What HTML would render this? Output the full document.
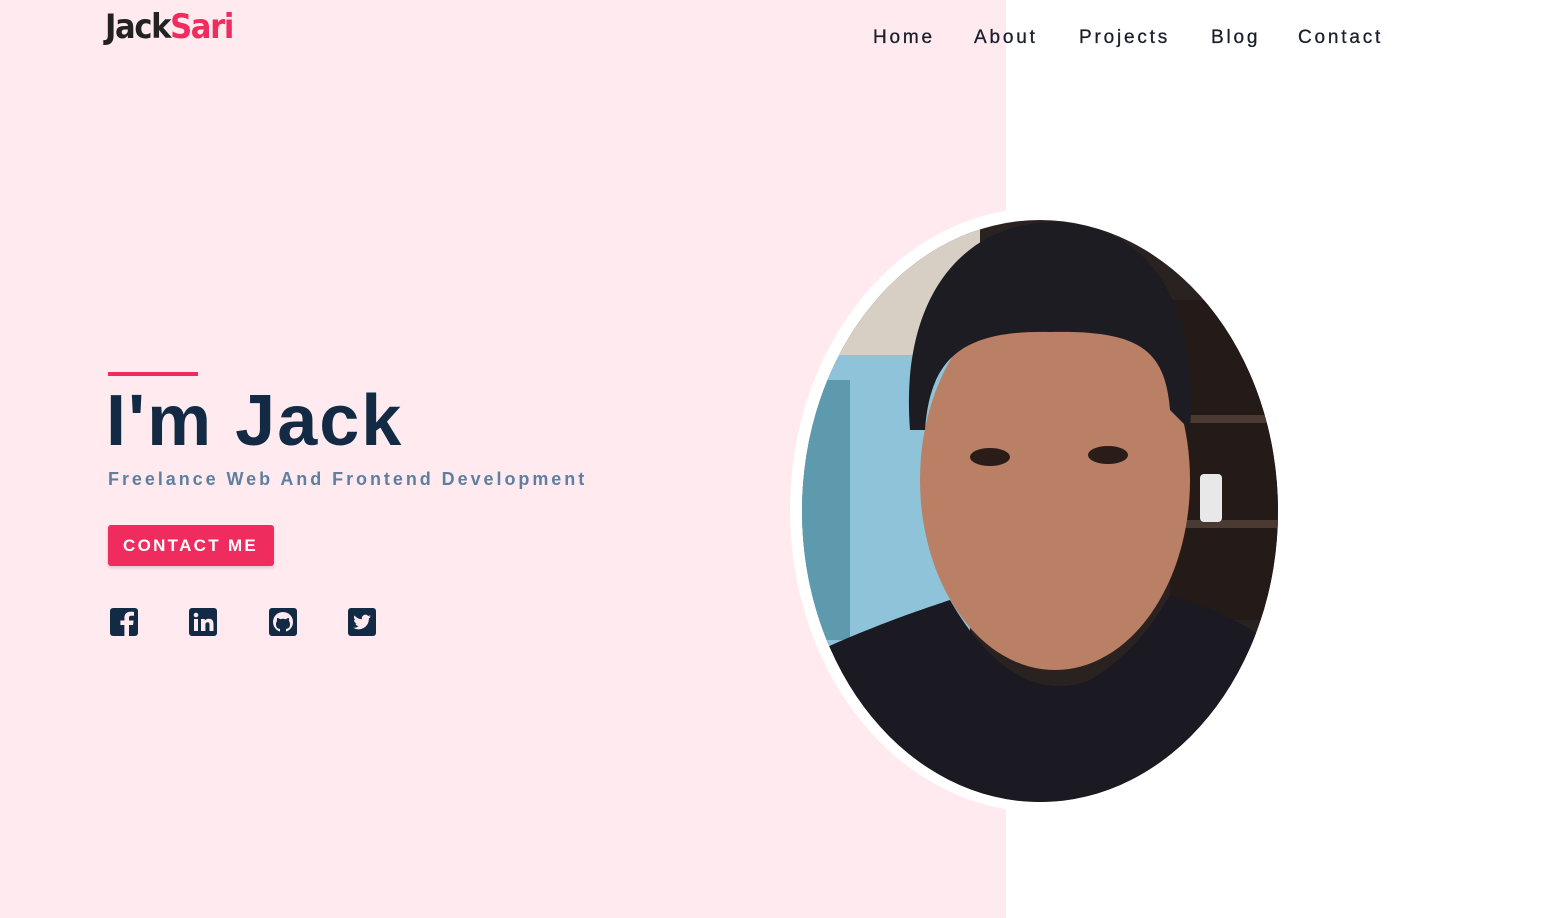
<!DOCTYPE html>
<html><head><meta charset="utf-8"><style>
*{margin:0;padding:0;box-sizing:border-box}
body{width:1549px;height:918px;overflow:hidden;background:#fff;font-family:"Liberation Sans",sans-serif;position:relative}
.pink{position:absolute;left:0;top:0;width:1006px;height:918px;background:#ffebef}
.logo{position:absolute;left:105px;top:7px;font-size:34px;font-weight:bold;letter-spacing:-1.5px;color:#222;font-family:"DejaVu Sans","Liberation Sans",sans-serif;transform:scaleX(.9);transform-origin:left}
.logo span{color:#f02b5d}
nav{position:absolute;top:27px;left:873px;font-size:19px;letter-spacing:2.8px;color:#1a1f2b;-webkit-text-stroke:.3px #1a1f2b}
nav a{position:absolute;white-space:nowrap}
.bar{position:absolute;left:108px;top:372px;width:90px;height:4px;background:#f02b5d}
h1{position:absolute;left:106px;top:380px;font-size:72px;font-weight:bold;color:#122a43;letter-spacing:2px}
.sub{position:absolute;left:108px;top:469px;font-size:18px;font-weight:bold;color:#5e7fa0;letter-spacing:2.95px}
.btn{position:absolute;left:108px;top:525px;width:166px;height:41px;background:#f02b5d;border-radius:3px;color:#fff;font-weight:bold;font-size:17px;letter-spacing:2.3px;line-height:41px;padding-left:15px;box-shadow:0 2px 3px rgba(0,0,0,.15)}
.ic{position:absolute;top:608px;width:28px;height:28px;background:#122a43;border-radius:3px}
</style></head><body>
<div class="pink"></div>
<div class="logo">Jack<span>Sari</span></div>
<nav><a style="left:0">Home</a><a style="left:101px">About</a><a style="left:206px">Projects</a><a style="left:338px">Blog</a><a style="left:425px">Contact</a></nav>
<div class="bar"></div>
<h1>I'm Jack</h1>
<div class="sub">Freelance Web And Frontend Development</div>
<div class="btn">CONTACT ME</div>
<div class="ic" style="left:110px"><svg width="28" height="28"><path d="M19 28V17h4l.6-4.5H19V10c0-1.3.4-2.2 2.3-2.2H24V3.9c-.5-.1-2-.2-3.6-.2-3.6 0-6 2.2-6 6.1v2.7h-4V17h4v11z" fill="#ffebef"/></svg></div>
<div class="ic" style="left:189px"><svg width="28" height="28"><rect x="5" y="11" width="4" height="12" fill="#ffebef"/><circle cx="7" cy="7" r="2.3" fill="#ffebef"/><path d="M12 11h3.8v1.8c.6-1.1 2-2.1 4-2.1 4 0 4.7 2.6 4.7 6V23h-4v-5.6c0-1.4 0-3.1-1.900-3.1s-2.2 1.5-2.2 3V23H12z" fill="#ffebef"/></svg></div>
<div class="ic" style="left:269px"><svg width="28" height="28"><circle cx="14" cy="14" r="10" fill="#ffebef"/><path d="M11 25v-4c-3-.5-4-2-4-5 0-1.2.4-2.2 1.1-3-.2-.6-.3-1.7.1-3 0 0 1.2-.2 3 1.2a9 9 0 0 1 5.6 0C18.6 9.8 19.8 10 19.8 10c.4 1.3.3 2.4.1 3 .7.8 1.1 1.8 1.1 3 0 3-1 4.5-4 5v4z" fill="#122a43"/></svg></div>
<div class="ic" style="left:348px"><svg width="28" height="28"><path d="M23 8.5c-.7.3-1.4.5-2.1.6.8-.5 1.3-1.2 1.6-2-.7.4-1.5.7-2.300.9a3.6 3.6 0 0 0-6.2 3.3 10.3 10.3 0 0 1-7.5-3.8 3.6 3.6 0 0 0 1.1 4.8c-.6 0-1.2-.2-1.6-.4 0 1.8 1.2 3.2 2.9 3.6-.5.2-1.1.2-1.6.1.5 1.4 1.8 2.5 3.4 2.5A7.3 7.3 0 0 1 5 19.6 10.3 10.3 0 0 0 20.9 10.900v-.5c.8-.5 1.5-1.2 2.1-1.9z" fill="#ffebef"/></svg></div>
<svg style="position:absolute;left:0;top:0" width="1549" height="918">
<defs><clipPath id="c"><ellipse cx="1040" cy="511" rx="238" ry="291"/></clipPath></defs>
<ellipse cx="1040" cy="510" rx="250" ry="302" fill="#fff"/>
<g clip-path="url(#c)">
<rect x="780" y="200" width="520" height="620" fill="#2a2220"/>
<rect x="780" y="200" width="200" height="160" fill="#d8cfc4"/>
<rect x="780" y="355" width="190" height="300" fill="#8fc3da"/>
<rect x="800" y="380" width="50" height="260" fill="#5d9aae"/>
<rect x="1170" y="300" width="130" height="320" fill="#241a18"/>
<rect x="1170" y="415" width="120" height="8" fill="#4a3a32"/>
<rect x="1170" y="520" width="120" height="8" fill="#4a3a32"/>
<rect x="1200" y="474" width="22" height="48" rx="4" fill="#e8e8e8"/>
<ellipse cx="1055" cy="480" rx="135" ry="190" fill="#b98066"/>
<path d="M910 430 C900 300 960 225 1050 222 C1140 222 1200 290 1190 430 L1170 410 C1165 350 1140 330 1050 332 C960 330 930 360 925 430Z" fill="#1c1c22"/>
<ellipse cx="990" cy="457" rx="20" ry="9" fill="#2a1c18"/>
<ellipse cx="1108" cy="455" rx="20" ry="9" fill="#2a1c18"/>
<path d="M800 660 C860 630 920 610 950 600 C990 670 1040 700 1090 680 C1140 650 1160 610 1170 595 C1220 610 1260 630 1290 660 L1300 820 L780 820Z" fill="#1b1a22"/>
</g>
</svg>
</body></html>
